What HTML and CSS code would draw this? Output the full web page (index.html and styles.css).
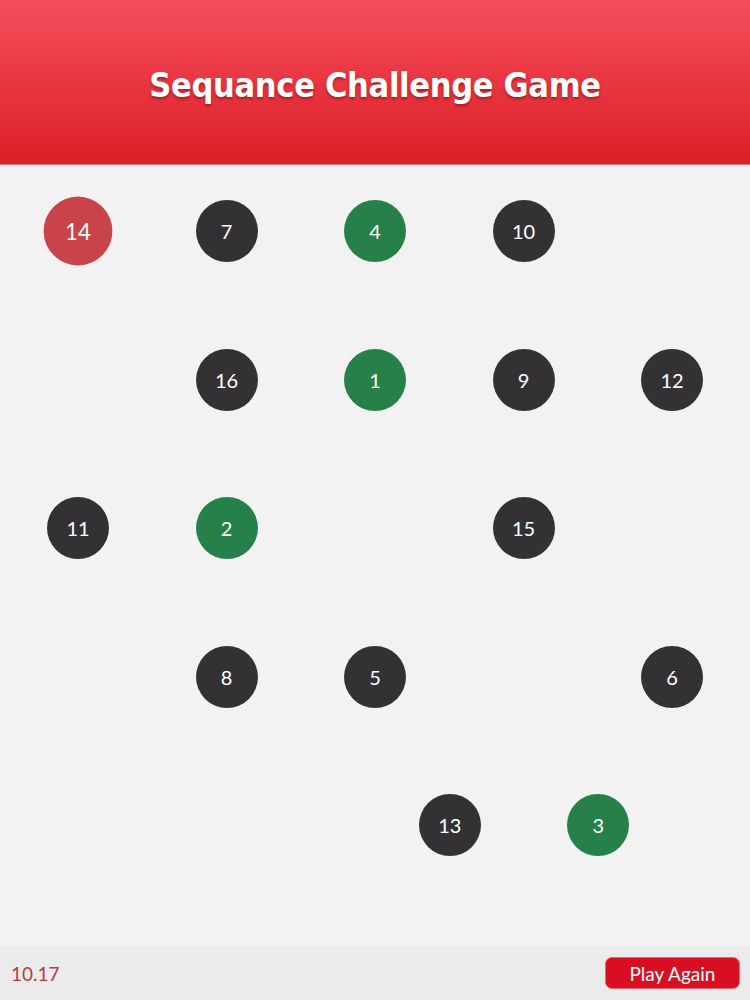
FILE: index.html
```html
<!DOCTYPE html>
<html lang="en">
<head>
    <meta charset="UTF-8">
    <meta name="viewport" content="width=device-width, initial-scale=1.0">
    <title>Sequance Challenge Game</title>
    <link rel="stylesheet" href="styles.css">
</head>
<body>

    <header class="top-bar">
        <h1>Sequance Challenge Game</h1>
    </header>

    <main class="board">
        <div class="dot wrong" style="left:47px; top:35px">14</div>
        <div class="dot" style="left:195.5px; top:35px">7</div>
        <div class="dot done" style="left:344px; top:35px">4</div>
        <div class="dot" style="left:492.5px; top:35px">10</div>

        <div class="dot" style="left:195.5px; top:183.5px">16</div>
        <div class="dot done" style="left:344px; top:183.5px">1</div>
        <div class="dot" style="left:492.5px; top:183.5px">9</div>
        <div class="dot" style="left:641px; top:183.5px">12</div>

        <div class="dot" style="left:47px; top:332px">11</div>
        <div class="dot done" style="left:195.5px; top:332px">2</div>
        <div class="dot" style="left:492.5px; top:332px">15</div>

        <div class="dot" style="left:195.5px; top:480.5px">8</div>
        <div class="dot" style="left:344px; top:480.5px">5</div>
        <div class="dot" style="left:641px; top:480.5px">6</div>

        <div class="dot" style="left:418.75px; top:629px">13</div>
        <div class="dot done" style="left:567.25px; top:629px">3</div>
    </main>

    <footer class="bottom-bar">
        <span class="timer">10.17</span>
        <button class="again">Play Again</button>
    </footer>

</body>
</html>
```

FILE: styles.css
```css
* {
    margin: 0;
    padding: 0;
    box-sizing: border-box;
}
body {
    font-family: 'Lato', 'Noto Sans', sans-serif;
    background: #f2f2f2;
    width: 750px;
    height: 1000px;
    display: flex;
    flex-direction: column;
    overflow: hidden;
}
.top-bar {
    height: 165px;
    padding-top: 6px;
    background: linear-gradient(to bottom, #f54e5c, #dc1f26);
    display: flex;
    justify-content: center;
    align-items: center;
    border-bottom: 1px solid #e8757a;
}
.top-bar h1 {
    font-family: 'DejaVu Sans Condensed', 'DejaVu Sans', sans-serif;
    font-stretch: condensed;
    font-weight: bold;
    font-size: 34px;
    color: #fff;
    letter-spacing: -0.3px;
    text-shadow: 0 2px 3px rgba(90, 0, 0, 0.45);
}
.board {
    flex: 1;
    position: relative;
    background: #f2f2f2;
}
.dot {
    position: absolute;
    width: 62px;
    height: 62px;
    border-radius: 50%;
    background: #333134;
    color: #fff;
    font-size: 20px;
    display: flex;
    justify-content: center;
    align-items: center;
}
.dot.done { background: #26804a; }
.dot.wrong {
    background: #c9444a;
    transform: scale(1.11);
}
.bottom-bar {
    height: 54px;
    background: #ebebeb;
    display: flex;
    justify-content: space-between;
    align-items: center;
    padding: 0 10px 0 11px;
}
.timer {
    color: #b93a44;
    font-size: 19px;
}
.again {
    font-family: 'Lato', 'Noto Sans', sans-serif;
    background: #d80f22;
    color: #fff;
    border: 1px solid #e86670;
    border-radius: 7px;
    font-size: 19px;
    width: 135px;
    height: 32px;
}
```
